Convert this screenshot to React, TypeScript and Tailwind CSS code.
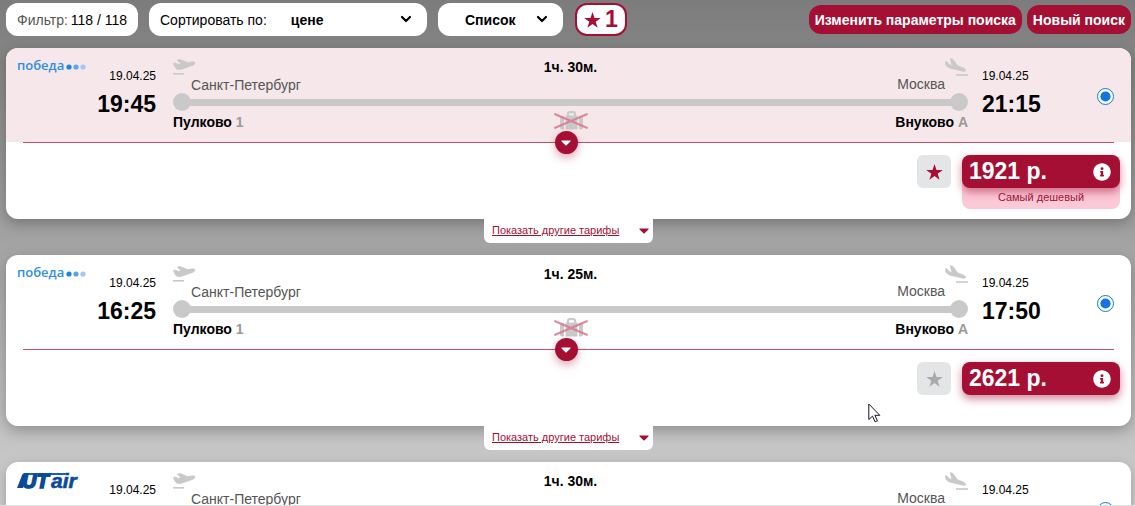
import { useState } from "react";
import { FaInfoCircle } from "react-icons/fa";

type Flight = {
  id: number;
  airline: "pobeda" | "utair";
  date: string;
  depart: string;
  arrive: string;
  duration: string;
  price: string;
  cheapest?: boolean;
};

const flights: Flight[] = [
  { id: 1, airline: "pobeda", date: "19.04.25", depart: "19:45", arrive: "21:15", duration: "1ч. 30м.", price: "1921 р.", cheapest: true },
  { id: 2, airline: "pobeda", date: "19.04.25", depart: "16:25", arrive: "17:50", duration: "1ч. 25м.", price: "2621 р." },
  { id: 3, airline: "utair", date: "19.04.25", depart: "18:20", arrive: "19:50", duration: "1ч. 30м.", price: "2840 р." },
];

function Star() {
  return (
    <svg width="17" height="16" viewBox="0 0 17 16" fill="currentColor">
      <path d="M8.500 0l2 5.900h6.300l-5.100 3.800 1.900 6.100-5.100-3.700-5.100 3.700 1.900-6.100L.2 5.900h6.300z" />
    </svg>
  );
}

function Caret() {
  return (
    <svg width="10" height="6" viewBox="0 0 10 6" fill="currentColor">
      <path d="M1 .5h8c.6 0 .8.5.4.9L5.600 5.200c-.4.4-.8.4-1.200 0L.6 1.400C.2 1 .4.500 1 .500z" />
    </svg>
  );
}

function Chevron() {
  return (
    <svg width="12" height="8" viewBox="0 0 12 8" fill="none" className="pointer-events-none absolute top-3 right-[15px]">
      <path d="M2 2l4 4 4-4" stroke="#000" strokeWidth="2.2" strokeLinecap="round" strokeLinejoin="round" />
    </svg>
  );
}

function TakeOff() {
  return (
    <svg width="23" height="16" viewBox="0 0 23 16" fill="#c9c9c9" className="mt-[11px] -mr-[5px] shrink-0">
      <path d="M.4 4.600L2.200 4 5 5.400l3.200-.8L4.200 1.200 7 .5l7.500 3 4.500-.6c2-.2 3 .4 3 1.300 0 1.200-2 2.100-4.200 2.700L9 10c-2.800.9-5 .7-6.500-1z" stroke="#c9c9c9" strokeWidth=".8" strokeLinejoin="round" />
      <path d="M0 14h11v1.600H0z" />
    </svg>
  );
}

function Landing() {
  return (
    <svg width="23" height="18" viewBox="0 0 23 18" fill="#c9c9c9" className="mt-[10px] shrink-0">
      <path d="M.5 3.600l1.500.4 2 2.600 3 1L5.300.6l2.600.8 4.800 6.500 4.500 1.700c2.300.9 3.700 2.200 3.400 3.100-.3.8-2.400.6-4.600 0L5.500 10.300C3 9.500 1.200 8.300.9 6.800z" stroke="#c9c9c9" strokeWidth=".8" strokeLinejoin="round" />
      <path d="M11 16.200h12v1.600H11z" />
    </svg>
  );
}

function NoLuggage() {
  return (
    <svg width="34" height="19" viewBox="0 0 34 19" className="justify-self-center" role="img" aria-label="Без багажа">
      <g fill="#c9c9c9">
        <path d="M6 7.500C6 6.100 6.900 5 8.200 5h1.800v13.500H8.200C6.900 18.500 6 17.500 6 16.200z" />
        <path d="M11.500 4.500H13V2.500C13 1 14 0 15.500 0h4C21 0 22 1 22 2.500v2h1.500v14h-12zM15 4.500h5V2.200h-5z" />
        <path d="M25 5h1.800C28.100 5 29 6.100 29 7.500v8.700c0 1.300-.9 2.300-2.200 2.300H25z" />
      </g>
      <path d="M1.200 3.200l31.600 13.600M32.800 3.200L1.200 16.800" stroke="#dc7690" strokeOpacity=".85" strokeWidth="2.200" strokeLinecap="round" />
    </svg>
  );
}

function PobedaLogo() {
  return (
    <div className="flex items-center gap-0.5 self-start pt-[9px]" role="img" aria-label="победа">
      <span className="font-['Open_Sans',sans-serif] text-[13px] leading-4 font-semibold text-[#2d8fdd]">победа</span>
      <svg width="20" height="6" viewBox="0 0 20 6" className="mt-1">
        <circle cx="3" cy="3" r="2.600" fill="#1f85d8" />
        <circle cx="10" cy="3" r="2.600" fill="#5ba6ea" />
        <circle cx="17" cy="3" r="2.600" fill="#a3c8f5" />
      </svg>
    </div>
  );
}

function UtairLogo() {
  return (
    <svg width="64" height="22" viewBox="0 0 64 22" className="mt-2 overflow-visible" role="img" aria-label="UTair">
      <path d="M5.500 4h6L6 18H0z" fill="#0b4a9a" />
      <path d="M6.500 3h43l-1.500 2H6z" fill="#1c5fb0" />
      <g fill="#0b4a9a" stroke="#0b4a9a" fontWeight="bold" fontStyle="italic" fontFamily="Liberation Sans, Arial, sans-serif">
        <text x="5" y="18" fontSize="20" strokeWidth="1.600">UT</text>
        <text x="34" y="18" fontSize="21" strokeWidth="0.600">air</text>
      </g>
    </svg>
  );
}

function FlightCard({ flight }: { flight: Flight }) {
  const [favorite, setFavorite] = useState(!!flight.cheapest);

  return (
    <article className="mb-3 flex flex-col items-center">
      <div className="w-full rounded-xl bg-white shadow-[0_5px_14px_rgba(0,0,0,0.25)]">
        <div className={flight.cheapest ? "flex h-[94px] rounded-t-xl bg-[#f6e8ea]" : "flex h-[94px]"}>
          {/* Вылет */}
          <div className="flex w-[150px] justify-between pl-[11px]">
            {flight.airline === "pobeda" ? <PobedaLogo /> : <UtairLogo />}
            <div className="-ml-4 pt-5 text-right">
              <p className="text-xs leading-4">{flight.date}</p>
              <p className="mt-1 text-[23px] leading-8 font-bold">{flight.depart}</p>
            </div>
          </div>

          {/* Маршрут */}
          <div className="ml-[17px] flex-1 text-sm">
            <div className="grid h-[45px] grid-cols-3 items-start">
              <div className="flex">
                <TakeOff />
                <span className="mt-[29px] leading-4 text-[#555]">Санкт-Петербург</span>
              </div>
              <span className="mt-[11px] text-center leading-4 font-bold">{flight.duration}</span>
              <div className="flex justify-end">
                <span className="mt-7 leading-4 text-[#555]">Москва</span>
                <Landing />
              </div>
            </div>
            <div className="flex items-center">
              <span className="size-[18px] rounded-full bg-[#c9c9c9]" />
              <span className="-mx-1 h-[7px] flex-1 bg-[#c9c9c9]" />
              <span className="size-[18px] rounded-full bg-[#c9c9c9]" />
            </div>
            <div className="grid grid-cols-3 leading-[22px] font-bold">
              <span>Пулково <span className="text-[#999]">1</span></span>
              <NoLuggage />
              <span className="text-right">Внуково <span className="text-[#999]">A</span></span>
            </div>
          </div>

          {/* Прилет */}
          <div className="flex w-[163px] items-start justify-between pr-[17px] pl-[14px]">
            <div className="pt-5">
              <p className="text-xs leading-4">{flight.date}</p>
              <p className="mt-1 text-[23px] leading-8 font-bold">{flight.arrive}</p>
            </div>
            <input
              type="radio"
              name={`flight-${flight.id}`}
              aria-label={`Рейс ${flight.depart}`}
              defaultChecked
              className="mt-10 size-[17px] accent-[#1275e6]"
            />
          </div>
        </div>

        <div className="relative mx-[17px] h-px bg-[#c0506f]">
          <button
            aria-label="Подробнее"
            className="absolute -top-[11px] left-1/2 -ml-3.5 flex size-[23px] items-center justify-center rounded-full bg-[#a50f34] text-white shadow-[0_4px_8px_rgba(165,15,52,0.35)]"
          >
            <Caret />
          </button>
        </div>

        <div className="flex items-start justify-end gap-[11px] pt-3 pr-[11px] pb-[10px]">
          <button
            aria-label="В избранное"
            onClick={() => setFavorite(!favorite)}
            className={`flex h-[33px] w-[34px] items-center justify-center rounded-md bg-[#e4e5e7] ${favorite ? "text-[#a50f34]" : "text-[#aaa]"}`}
          >
            <Star />
          </button>
          <div className="min-h-[54px] w-[158px]">
            <div className={flight.cheapest ? "rounded-lg bg-[#fbc9d7]" : "rounded-lg"}>
              <button className="flex h-[33px] w-full items-center justify-between rounded-lg bg-[#a50f34] pr-[9px] pl-[7px] text-[23px] font-bold text-white shadow-[0_4px_8px_rgba(165,15,52,0.5)]">
                {flight.price}
                <FaInfoCircle size={18} />
              </button>
              {flight.cheapest && (
                <p className="pb-[3px] text-center text-[11px] leading-[18px] text-[#a50f34]">Самый дешевый</p>
              )}
            </div>
          </div>
        </div>
      </div>

      <a href="#tariffs" className="relative flex h-6 w-[169px] items-center justify-between rounded-b-md bg-white pr-1 pl-2 text-[11px] text-[#a50f34]">
        <span className="underline">Показать другие тарифы</span>
        <Caret />
      </a>
    </article>
  );
}

export default function App() {
  return (
    <div className="relative h-screen overflow-hidden border-b border-[#e0e0e0] bg-linear-to-b from-[#7c7c7c] to-[#cfcfcf] pr-1 pl-1.5 font-['Liberation_Sans',Arial,sans-serif] text-sm text-black">
      <header className="flex h-12 items-start pt-[3px]">
        <div className="flex h-[33px] w-[132px] items-center justify-between rounded-xl bg-white px-[11px]">
          <span className="text-[#555]">Фильтр:</span>
          <span>118 / 118</span>
        </div>

        <label className="relative ml-[11px] flex h-[33px] w-[278px] items-center rounded-xl bg-white pl-[11px]">
          Сортировать по:
          <select className="h-full flex-1 appearance-none pl-6 font-bold outline-none">
            <option>цене</option>
            <option>времени</option>
          </select>
          <Chevron />
        </label>

        <div className="relative ml-[11px] h-[33px] w-[125px] rounded-xl bg-white">
          <select aria-label="Вид" className="h-full w-full appearance-none pl-[27px] font-bold outline-none">
            <option>Список</option>
            <option>Таблица</option>
          </select>
          <Chevron />
        </div>

        <button
          aria-label="Избранное"
          className="ml-3 flex h-[33px] w-[52px] items-center justify-center gap-1 rounded-xl border-2 border-[#a50f34] bg-white text-[23px] font-bold text-[#a50f34]"
        >
          <Star />
          1
        </button>

        <div className="mt-0.5 ml-auto flex gap-[5px]">
          <button className="h-[29px] rounded-xl bg-[#a50f34] px-1.5 font-bold text-white">Изменить параметры поиска</button>
          <button className="h-[29px] rounded-xl bg-[#a50f34] px-1.5 font-bold text-white">Новый поиск</button>
        </div>
      </header>

      <main>
        {flights.map((flight) => (
          <FlightCard key={flight.id} flight={flight} />
        ))}
      </main>

      {/* Курсор */}
      <svg width="13" height="20" viewBox="0 0 13 20" className="pointer-events-none absolute top-[403px] left-[868px]">
        <path d="M.8 1v15.500l3.700-3.300 2.600 5.600 2.300-1-2.500-5.500h4.900z" fill="#fff" stroke="#1a1428" strokeWidth="1" />
      </svg>
    </div>
  );
}
